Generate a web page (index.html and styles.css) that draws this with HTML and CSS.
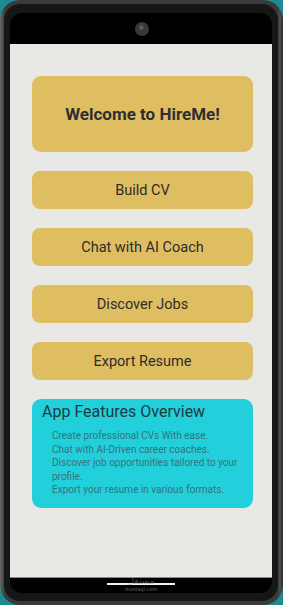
FILE: index.html
```html
<!DOCTYPE html>
<html lang="en">
<head>
<meta charset="utf-8">
<title>HireMe</title>
<link rel="stylesheet" href="styles.css">
</head>
<body>
<div class="device">
  <div class="bezel">
    <div class="screen">
      <div class="topbar"><span class="camera"></span></div>
      <main class="content">
        <div class="welcome">Welcome to HireMe!</div>
        <button class="action">Build CV</button>
        <button class="action">Chat with AI Coach</button>
        <button class="action">Discover Jobs</button>
        <button class="action">Export Resume</button>
        <section class="features">
          <h2 class="features-title">App Features Overview</h2>
          <ul class="features-list">
            <li>Create professional CVs With ease.</li>
            <li>Chat with AI-Driven career coaches.</li>
            <li>Discover job opportunities tailored to your profile.</li>
            <li>Export your resume in various formats.</li>
          </ul>
        </section>
      </main>
      <div class="bottombar"><span class="home"></span></div>
      <div class="watermark"><span class="wm-ar">مستقل</span><span class="wm-en">mostaql.com</span></div>
    </div>
  </div>
</div>
</body>
</html>
```
FILE: styles.css
```css
html, body {
  margin: 0;
  padding: 0;
}
body {
  width: 283px;
  height: 605px;
  background: #1d8c92;
  font-family: Roboto, "Noto Sans", sans-serif;
  overflow: hidden;
}
.device {
  box-sizing: border-box;
  width: 283px;
  height: 605px;
  border-radius: 20px;
  background: linear-gradient(90deg, #6a6a6a 0, #4a4a4a 3px, #3a3a3a 5px, #3a3a3a calc(100% - 5px), #4f4f4f calc(100% - 3px), #2a2a2a 100%);
  padding: 4px 5px 4px 4px;
}
.bezel {
  box-sizing: border-box;
  height: 100%;
  border-radius: 16px;
  background: #161616;
  padding: 9px 6px 8px 6px;
}
.screen {
  position: relative;
  height: 100%;
  border-radius: 12px;
  background: #000;
  display: flex;
  flex-direction: column;
  overflow: hidden;
}
.topbar {
  height: 31px;
  flex: none;
  display: flex;
  justify-content: center;
  align-items: center;
}
.camera {
  width: 14px;
  height: 14px;
  border-radius: 50%;
  background: radial-gradient(circle at 45% 40%, #777 0, #555 1.5px, #3a3a3a 3px, #353535 100%);
  margin-left: 1px;
  margin-top: 1px;
}
.content {
  flex: 1;
  background: #e8e8e4;
  border-bottom: 1px solid #8a8a8a;
  padding: 32px 19px 0 22px;
  display: flex;
  flex-direction: column;
  gap: 19px;
}
.welcome {
  height: 76px;
  border-radius: 9px;
  background: #dfbe62;
  display: flex;
  align-items: center;
  justify-content: center;
  font-size: 17px;
  font-weight: 700;
  color: #2e2e30;
}
.action {
  height: 38px;
  border: 0;
  border-radius: 8px;
  background: #dfbe62;
  font-family: Roboto, "Noto Sans", sans-serif;
  font-size: 14.5px;
  font-weight: 400;
  color: #2c2c2a;
  padding: 0;
}
.features {
  border-radius: 9px;
  background: #22d0dc;
  padding: 3px 14px 11px 10px;
}
.features-title {
  margin: 0;
  font-size: 16px;
  font-weight: 400;
  line-height: 19px;
  color: #1f3a3e;
}
.features-list {
  list-style: none;
  margin: 8px 0 0 0;
  padding: 0 0 0 10px;
  font-size: 10px;
  line-height: 13.5px;
  color: #35737a;
}
.bottombar {
  height: 15px;
  flex: none;
  display: flex;
  justify-content: center;
}
.home {
  width: 68px;
  height: 2px;
  margin-top: 5px;
  background: #f2f2f2;
}
.watermark {
  position: absolute;
  left: 0;
  right: 0;
  bottom: 0;
  display: flex;
  flex-direction: column;
  align-items: center;
  line-height: 1;
  pointer-events: none;
}
.wm-ar {
  font-family: "DejaVu Sans", sans-serif;
  font-size: 9px;
  color: rgba(150, 150, 150, 0.55);
  margin-bottom: 1px;
}
.wm-en {
  font-family: "DejaVu Sans", sans-serif;
  font-size: 5px;
  color: rgba(140, 140, 140, 0.8);
  margin-bottom: 1px;
}
```
